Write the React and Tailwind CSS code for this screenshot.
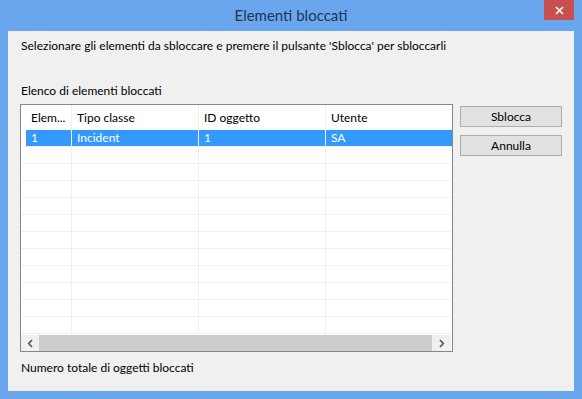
const columns = [
  { label: 'Elem...', width: 'w-[46px]' },
  { label: 'Tipo classe', width: 'w-[127px]' },
  { label: 'ID oggetto', width: 'w-[127px]' },
  { label: 'Utente', width: 'flex-1' },
];

const selected = ['1', 'Incident', '1', 'SA'];
const emptyRows = Array.from({ length: 11 });

function ScrollBar() {
  return (
    <div className="flex h-[16px] shrink-0 items-stretch pr-[1px]">
      <div className="flex w-[18px] items-center justify-center bg-[#f0f0f0] text-[#606060]">
        <svg width="7" height="9" viewBox="0 0 7 9">
          <path d="M5 1 L1.8 4.5 L5 8" fill="none" stroke="currentColor" strokeWidth="1.8" />
        </svg>
      </div>
      <div className="flex-1 bg-[#cdcdcd]" />
      <div className="flex w-[19px] items-center justify-center bg-[#f0f0f0] text-[#606060]">
        <svg width="7" height="9" viewBox="0 0 7 9">
          <path d="M2 1 L5.2 4.5 L2 8" fill="none" stroke="currentColor" strokeWidth="1.8" />
        </svg>
      </div>
    </div>
  );
}

function Row({ cells, active }) {
  return (
    <div className="flex h-[17px] shrink-0 border-b border-[#f0f0f0]">
      <div className="w-[5px] shrink-0" />
      {columns.map((col, i) => (
        <div
          key={col.label}
          className={`${col.width} shrink-0 truncate px-[5px] leading-[16px] ${
            i < 3 ? 'border-r border-[#f0f0f0]' : ''
          } ${active ? 'bg-[#3399ff] text-white' : ''}`}
        >
          {cells ? cells[i] : ''}
        </div>
      ))}
    </div>
  );
}

export default function App() {
  return (
    <div
      className="flex h-[399px] w-[582px] flex-col bg-[#6aa6ee] text-[12px] text-black"
      style={{ fontFamily: 'Lato, "Liberation Sans", sans-serif' }}
    >
      <div className="relative flex h-[31px] shrink-0 items-center justify-center">
        <span className="text-[15px] text-[#1e3554]">Elementi bloccati</span>
        <button
          type="button"
          className="absolute right-[8px] top-0 flex h-[20px] w-[30px] items-center justify-center bg-[#c7504f] text-white"
          aria-label="Chiudi"
        >
          <svg width="9" height="9" viewBox="0 0 9 9">
            <path d="M1 1 L8 8 M8 1 L1 8" stroke="white" strokeWidth="1.6" />
          </svg>
        </button>
      </div>

      <div className="mx-[8px] mb-[8px] flex flex-1 flex-col bg-[#f0f0f0] pl-[12px] pt-[7px]">
        <p className="ml-[1px] leading-[16px]">
          Selezionare gli elementi da sbloccare e premere il pulsante 'Sblocca' per sbloccarli
        </p>

        <p className="ml-[1px] mt-[29px] leading-[16px]">Elenco di elementi bloccati</p>

        <div className="mt-[5px] flex gap-[7px]">
          <div className="flex h-[248px] w-[433px] flex-col border border-[#828790] bg-white">
            <div className="flex h-[25px] shrink-0">
              <div className="w-[5px] shrink-0" />
              {columns.map((col, i) => (
                <div
                  key={col.label}
                  className={`${col.width} shrink-0 truncate px-[5px] pt-[5px] leading-[16px] ${
                    i < 3 ? 'border-r border-[#f0f0f0]' : ''
                  }`}
                >
                  {col.label}
                </div>
              ))}
            </div>
            <Row cells={selected} active />
            <div className="flex-1 overflow-hidden">
              {emptyRows.map((_, i) => (
                <Row key={i} />
              ))}
            </div>
            <ScrollBar />
          </div>

          <div className="mt-[2px] flex flex-col gap-[8px]">
            <button
              type="button"
              className="h-[21px] w-[102px] border border-[#adadad] bg-[#e1e1e1] leading-[19px]"
            >
              Sblocca
            </button>
            <button
              type="button"
              className="h-[21px] w-[102px] border border-[#adadad] bg-[#e1e1e1] leading-[19px]"
            >
              Annulla
            </button>
          </div>
        </div>

        <p className="ml-[1px] mt-[8px] leading-[16px]">Numero totale di oggetti bloccati</p>
      </div>
    </div>
  );
}
